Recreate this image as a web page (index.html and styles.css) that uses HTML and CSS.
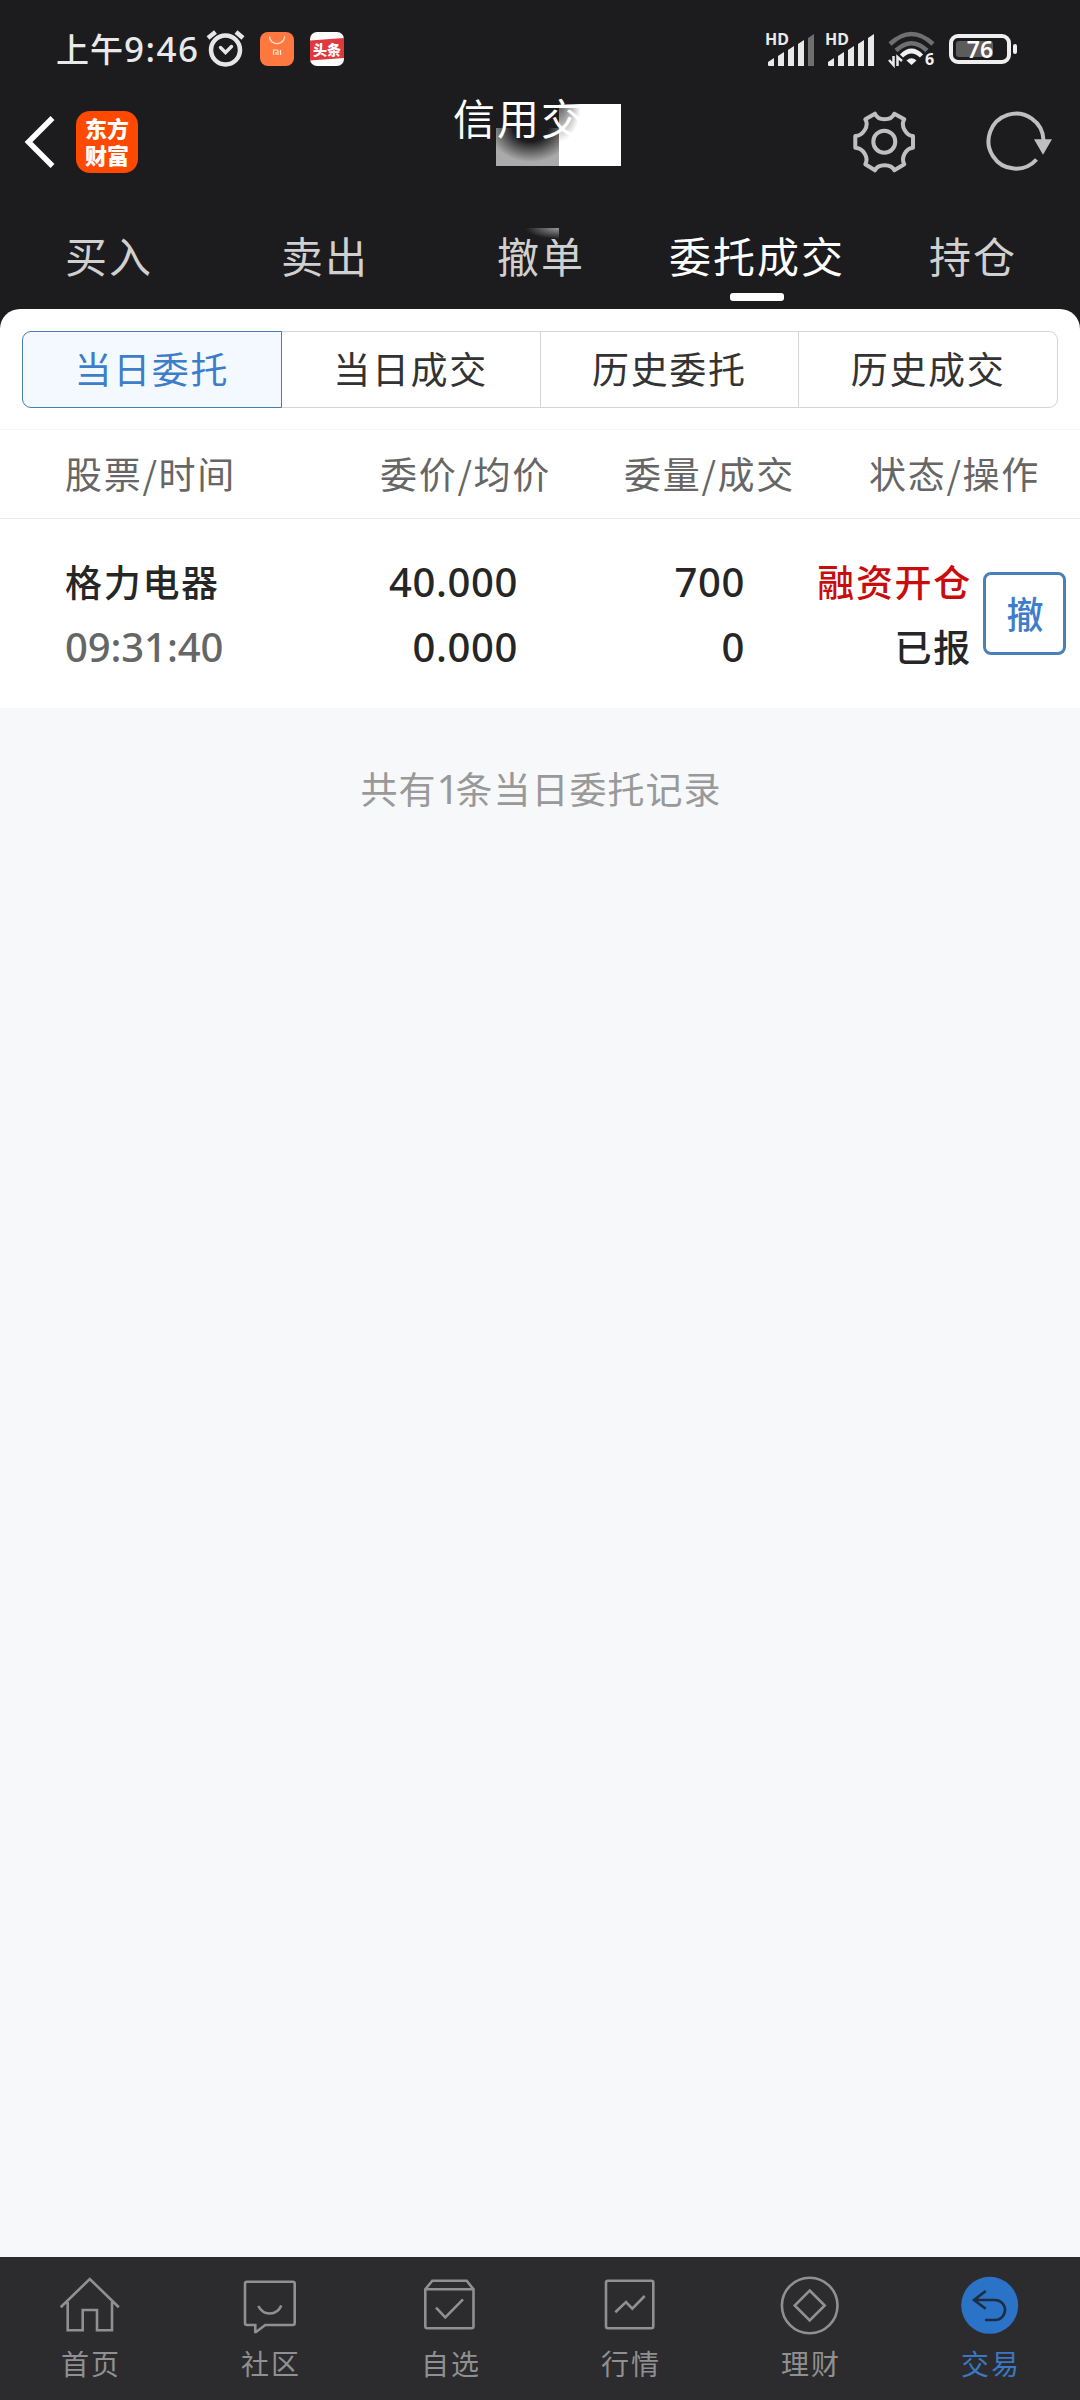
FILE: index.html
```
<!DOCTYPE html>
<html lang="zh-CN">
<head>
    <meta charset="UTF-8">
    <meta name="viewport" content="width=device-width, initial-scale=1.0">
    <title>信用交易</title>
    <link rel="stylesheet" href="styles.css">
</head>
<body>
    <header class="top">
        <div class="status-bar">
            <div class="status-time">上午<span class="time-num">9:46</span></div>
            <svg class="alarm" width="42" height="40" viewBox="0 0 42 40" fill="none" stroke="#e6e6e6" stroke-width="4.500" stroke-linecap="round">
                <circle cx="20.5" cy="21" r="14.5"/>
                <path d="M15.5 18.5l5 5 6-6" stroke-width="3.4"/>
                <path d="M3 9l7.5-6M31 3l7 6" stroke-linecap="butt"/>
            </svg>
            <svg class="app-icon" width="34" height="34" viewBox="0 0 34 34">
                <rect width="34" height="34" rx="8" fill="#ff7840"/>
                <path d="M9.500 4.500c0 9.500 15 9.500 15 0" fill="none" stroke="#ffe6cf" stroke-width="1.300"/>
                <path d="M13.500 23v-5h3.500q1 0 1 1v4M16 20v3M20.500 18v5" fill="none" stroke="#ffe6cf" stroke-width="1.200"/>
            </svg>
            <svg class="app-icon" width="34" height="34" viewBox="0 0 34 34">
                <rect width="34" height="34" rx="7" fill="#fff"/>
                <path d="M0 8.500L34 6v20L0 28.500z" fill="#e0383e"/>
                <text class="toutiao" x="17" y="22.500" text-anchor="middle">头条</text>
            </svg>
            <div class="status-right">
                <svg width="52" height="36" viewBox="0 0 52 36" fill="#e9e9e9">
                    <text class="hd" x="0" y="14">HD</text>
                    <path d="M3 31l6-4v8H4q-1 0-1-1zM13 25l6-4v14h-6zM23 19l6-4v20h-6zM33 13l6-4v26h-6z"/>
                    <path d="M43 7l6-4v32h-6z" fill="#6f6f70"/>
                </svg>
                <svg width="52" height="36" viewBox="0 0 52 36" fill="#e9e9e9">
                    <text class="hd" x="0" y="14">HD</text>
                    <path d="M3 31l6-4v8H4q-1 0-1-1zM13 25l6-4v14h-6zM23 19l6-4v20h-6zM33 13l6-4v26h-6zM43 7l6-4v32h-6z"/>
                </svg>
                <svg class="wifi" width="48" height="38" viewBox="0 0 48 38" fill="none" stroke="#6f6f70" stroke-width="4.500">
                    <path d="M2 14Q23.500-6 45 14M8 20.500Q23.500 6 39 20.500"/>
                    <path d="M13.500 26Q23.500 16 33.500 26" stroke="#f1f1f1" stroke-width="4.500"/>
                    <path d="M18.500 30.500Q23.500 26 28.500 30.500L23.500 35z" fill="#f1f1f1" stroke="none"/>
                    <path d="M1 30l4.500 5V26M9.500 36v-9l4.500 4" stroke="#e9e9e9" stroke-width="2.500"/>
                    <text class="wifi-six" x="37" y="35" stroke="none" fill="#f1f1f1">6</text>
                </svg>
                <svg class="battery" width="70" height="32" viewBox="0 0 70 32">
                    <rect x="2" y="3" width="58" height="26" rx="7" fill="none" stroke="#efefef" stroke-width="4"/>
                    <rect x="7" y="8" width="37" height="16" rx="3" fill="#5c5c5d"/>
                    <rect x="64" y="11" width="4" height="10" rx="2" fill="#efefef"/>
                    <text class="battery-num" x="31" y="24.500" text-anchor="middle">76</text>
                </svg>
            </div>
        </div>

        <div class="nav-bar">
            <svg class="back" width="30" height="52" viewBox="0 0 30 52" fill="none" stroke="#fff" stroke-width="5.500">
                <path d="M27.500 2L3.500 26l24 24"/>
            </svg>
            <div class="logo"><span>东方</span><span>财富</span></div>
            <div class="title">
                <span class="mask mask-gray"></span>
                <span class="mask mask-white"></span>
                <span class="title-text">信用交</span>
            </div>
            <div class="nav-actions">
                <svg width="62" height="62" viewBox="0 0 62 62" fill="none" stroke="#bfbfbf" stroke-width="4" stroke-linejoin="round">
                    <path d="M22 2.700C25 10 38.300 10 41.300 2.700L51.300 8.300C47 14.500 53.500 25 60 25V36.700C53 37 47.500 47 51.300 53.300L41.300 59.300C38.300 52.500 25 52.500 22 59.300L12.300 53.300C16 47 10.500 37 2.300 36.700V25C10 25 16.500 14.500 12.300 8.300Z"/>
                    <circle cx="31.300" cy="30.700" r="11"/>
                </svg>
                <svg width="66" height="62" viewBox="0 0 66 62">
                    <path d="M56.500 29A27.500 27.500 0 1 0 49.500 48.500" fill="none" stroke="#bfbfbf" stroke-width="4"/>
                    <path d="M47 28.300h18l-9 15.500z" fill="#bfbfbf"/>
                </svg>
            </div>
        </div>

        <nav class="tabs">
            <a class="tab">买入</a>
            <a class="tab">卖出</a>
            <a class="tab"><span class="mask mask-tab"></span>撤单</a>
            <a class="tab active">委托成交</a>
            <a class="tab">持仓</a>
        </nav>
    </header>

    <main>
        <div class="sheet-wrap">
            <section class="sheet">
                <div class="segments">
                    <div class="segment selected">当日委托</div>
                    <div class="segment">当日成交</div>
                    <div class="segment">历史委托</div>
                    <div class="segment">历史成交</div>
                </div>
                <div class="table-head">
                    <span>股票/时间</span>
                    <span>委价/均价</span>
                    <span>委量/成交</span>
                    <span>状态/操作</span>
                </div>
                <div class="order">
                    <div class="cell name">
                        <div>格力电器</div>
                        <div class="num time">09:31:40</div>
                    </div>
                    <div class="cell">
                        <div class="num">40.000</div>
                        <div class="num">0.000</div>
                    </div>
                    <div class="cell">
                        <div class="num">700</div>
                        <div class="num">0</div>
                    </div>
                    <div class="cell state">
                        <div class="red">融资开仓</div>
                        <div>已报</div>
                    </div>
                    <button class="cancel">撤</button>
                </div>
            </section>
        </div>
        <p class="summary">共有<span class="one">1</span>条当日委托记录</p>
    </main>

    <footer class="bottom-nav">
        <a class="nav-item">
            <svg width="60" height="60" viewBox="0 0 60 60">
                <path d="M.7 31.300L29.800 3l29 28.300M7.700 26v28.300h15V34H37v20.300h15V26"/>
            </svg>
            <span>首页</span>
        </a>
        <a class="nav-item">
            <svg width="60" height="60" viewBox="0 0 60 60">
                <path d="M7 5.700h45.700q2 0 2 2V47q0 2-2 2H25.300L16 56h-.7v-7H7q-2 0-2-2V7.700q0-2 2-2zM18.300 30c5 10 18.500 10 23-.5"/>
            </svg>
            <span>社区</span>
        </a>
        <a class="nav-item">
            <svg width="60" height="60" viewBox="0 0 60 60">
                <path d="M5.300 13.300L12.300 4.700h34.400l6.800 8.600v37q0 2-2 2H7.300q-2 0-2-2zh48.200M16 31.700l9.300 9.600 17.700-18"/>
            </svg>
            <span>自选</span>
        </a>
        <a class="nav-item">
            <svg width="60" height="60" viewBox="0 0 60 60">
                <rect x="6" y="4.700" width="47.300" height="47.600" rx="2"/>
                <path d="M15.300 36.300L26 26l6.300 6.700L44.700 20"/>
            </svg>
            <span>行情</span>
        </a>
        <a class="nav-item">
            <svg width="60" height="60" viewBox="0 0 60 60">
                <circle cx="29.700" cy="29.500" r="27.800"/>
                <path d="M29.700 14.500l15 15-15 15-15-15z"/>
            </svg>
            <span>理财</span>
        </a>
        <a class="nav-item current">
            <svg width="60" height="60" viewBox="0 0 60 60">
                <circle cx="29.700" cy="29.300" r="28.500"/>
                <path d="M25.700 15L14 24l11.700 8.700M14 24h21a10 10 0 0 1 0 20H25"/>
            </svg>
            <span>交易</span>
        </a>
    </footer>
</body>
</html>
```

FILE: styles.css
```
* {
    box-sizing: border-box;
}

body {
    display: flex;
    flex-direction: column;
    width: 1080px;
    height: 2400px;
    margin: 0;
    background-color: #f6f8fa;
    color: #262626;
    font-family: "Noto Sans CJK SC", sans-serif;
    font-size: 37px;
    letter-spacing: 1.7px;
}

svg {
    display: block;
    flex: none;
    overflow: visible;
}

.top {
    background-color: #1c1c1e;
    color: #d0d0d0;
}

/* status bar */
.status-bar {
    display: flex;
    align-items: center;
    height: 98px;
    padding: 0 61px 0 56px;
}

.status-time {
    width: 149px;
    line-height: 50px;
    font-size: 33px;
    font-weight: 500;
    letter-spacing: 1px;
    color: #e9e9e9;
    white-space: nowrap;
    padding-bottom: 2px;
}

.time-num {
    font-family: "Noto Sans", sans-serif;
    font-size: 35px;
    letter-spacing: 1.5px;
}

.alarm {
    margin-right: 13px;
}

.app-icon {
    margin-right: 16px;
}

.toutiao {
    font-size: 14px;
    font-weight: 900;
    letter-spacing: 0;
    fill: #fff;
}

.status-right {
    display: flex;
    align-items: center;
    gap: 8px;
    margin-left: auto;
}

.hd {
    font-family: "Noto Sans", sans-serif;
    font-size: 16px;
    font-weight: 700;
    letter-spacing: 0;
}

.wifi {
    margin-left: 3px;
}

.wifi-six {
    font-family: "Noto Sans", sans-serif;
    font-size: 16px;
    font-weight: 700;
    letter-spacing: 0;
}

.battery {
    margin-left: 5px;
}

.battery-num {
    font-family: "Noto Sans", sans-serif;
    font-size: 23px;
    font-weight: 600;
    letter-spacing: 0;
    fill: #fff;
}

/* title bar */
.nav-bar {
    display: flex;
    align-items: center;
    height: 88px;
    padding: 0 27px 0 25px;
}

.logo {
    display: flex;
    flex-direction: column;
    width: 62px;
    height: 62px;
    margin-left: 21px;
    padding-top: 3px;
    border-radius: 14px;
    background-color: #ff4800;
    color: #fff;
    font-size: 22px;
    font-weight: 900;
    line-height: 27px;
    letter-spacing: 0;
    text-align: center;
}

.title {
    position: relative;
    width: 176px;
    height: 62px;
    margin-left: 315px;
    color: #fff;
    font-size: 42px;
    line-height: 62px;
    letter-spacing: 2px;
    white-space: nowrap;
}

.title-text {
    position: relative;
    top: -25px;
}

/* blurred account name */
.mask {
    position: absolute;
}

.mask-gray {
    left: 43px;
    top: 17px;
    width: 63px;
    height: 38px;
    background: radial-gradient(ellipse 42px 34px at 55% 0, #1c1c1e 40%, #aaa 100%);
}

.mask-white {
    left: 106px;
    top: -7px;
    width: 62px;
    height: 62px;
    background: radial-gradient(ellipse 22px 38px at 0 0, #555 0, #fff 100%);
}

.mask-tab {
    left: 93px;
    top: 42px;
    width: 34px;
    height: 11px;
    background: radial-gradient(ellipse farthest-side at 100% 0, #999 0, #1c1c1e 100%);
}

.nav-actions {
    display: flex;
    gap: 72px;
    margin-left: auto;
}

/* tabs */
.tabs {
    display: flex;
    height: 123px;
}

.tab {
    position: relative;
    display: flex;
    flex-direction: column;
    align-items: center;
    width: 216px;
    padding: 38px 0 0 2px;
    font-size: 42px;
    line-height: 62px;
    letter-spacing: 2px;
}

.tab.active {
    color: #fff;
}

.tab.active::after {
    content: "";
    width: 54px;
    height: 8px;
    margin-top: 7px;
    border-radius: 3px;
    background-color: #fff;
}

/* order list */
main {
    flex: 1;
}

.sheet-wrap {
    background-color: #1c1c1e;
}

.sheet {
    height: 399px;
    padding-top: 22px;
    border-radius: 20px 20px 0 0;
    background-color: #fff;
}

.segments {
    display: flex;
    height: 77px;
    margin: 0 22px;
}

.segment {
    width: 260px;
    margin-right: -1px;
    border: 1px solid #d3d5d6;
    line-height: 73px;
    text-align: center;
    color: #333;
}

.segment:last-child {
    margin-right: 0;
    border-radius: 0 9px 9px 0;
}

.segment.selected {
    position: relative;
    border-color: #477eb4;
    border-radius: 9px 0 0 9px;
    background-color: #f4f9ff;
    color: #3d7dca;
}

.table-head {
    display: grid;
    grid-template-columns: 315px 244px 245px 1fr;
    height: 90px;
    margin-top: 21px;
    padding-left: 65px;
    border-top: 1px solid #f4f4f4;
    border-bottom: 1px solid #ebebeb;
    color: #666;
    line-height: 87px;
}

.order {
    display: flex;
    padding-top: 30px;
}

.cell {
    width: 227px;
    line-height: 65px;
    font-weight: 500;
    text-align: right;
    letter-spacing: 1.7px;
}

.cell.name {
    width: 291px;
    padding-left: 65px;
    text-align: left;
}

.num {
    font-family: "Noto Sans", sans-serif;
    font-size: 40px;
    letter-spacing: .6px;
}

.time {
    color: #666;
    letter-spacing: -.1px;
}

.red {
    color: #c90d0d;
}

.cancel {
    width: 83px;
    height: 83px;
    margin: 23px 0 0 11px;
    padding: 0 0 2px 1px;
    border: 3px solid #4a80b8;
    border-radius: 8px;
    background-color: #fff;
    color: #3d7dca;
    font-family: inherit;
    font-size: 37px;
    font-weight: 500;
}

.summary {
    margin: 47px 0 0;
    padding-left: 2px;
    color: #999;
    font-size: 37px;
    line-height: 66px;
    letter-spacing: 1px;
    text-align: center;
}

.one {
    font-family: "Noto Sans", sans-serif;
    font-size: 40px;
    line-height: 1;
    letter-spacing: -4px;
}

/* bottom navigation */
.bottom-nav {
    display: flex;
    height: 143px;
    background-color: #2c2c2e;
}

.nav-item {
    display: flex;
    flex-direction: column;
    align-items: center;
    width: 180px;
    padding-top: 19px;
    color: #909092;
    font-size: 28px;
    line-height: 40px;
    letter-spacing: 2px;
}

.nav-item svg {
    fill: none;
    stroke: #909092;
    stroke-width: 2.6;
}

.nav-item span {
    margin-top: 7px;
    padding-left: 2px;
}

.nav-item.current {
    color: #3b78c2;
}

.nav-item.current circle {
    fill: #2a73c7;
    stroke: none;
}

.nav-item.current path {
    stroke: #1d2c40;
}
```
